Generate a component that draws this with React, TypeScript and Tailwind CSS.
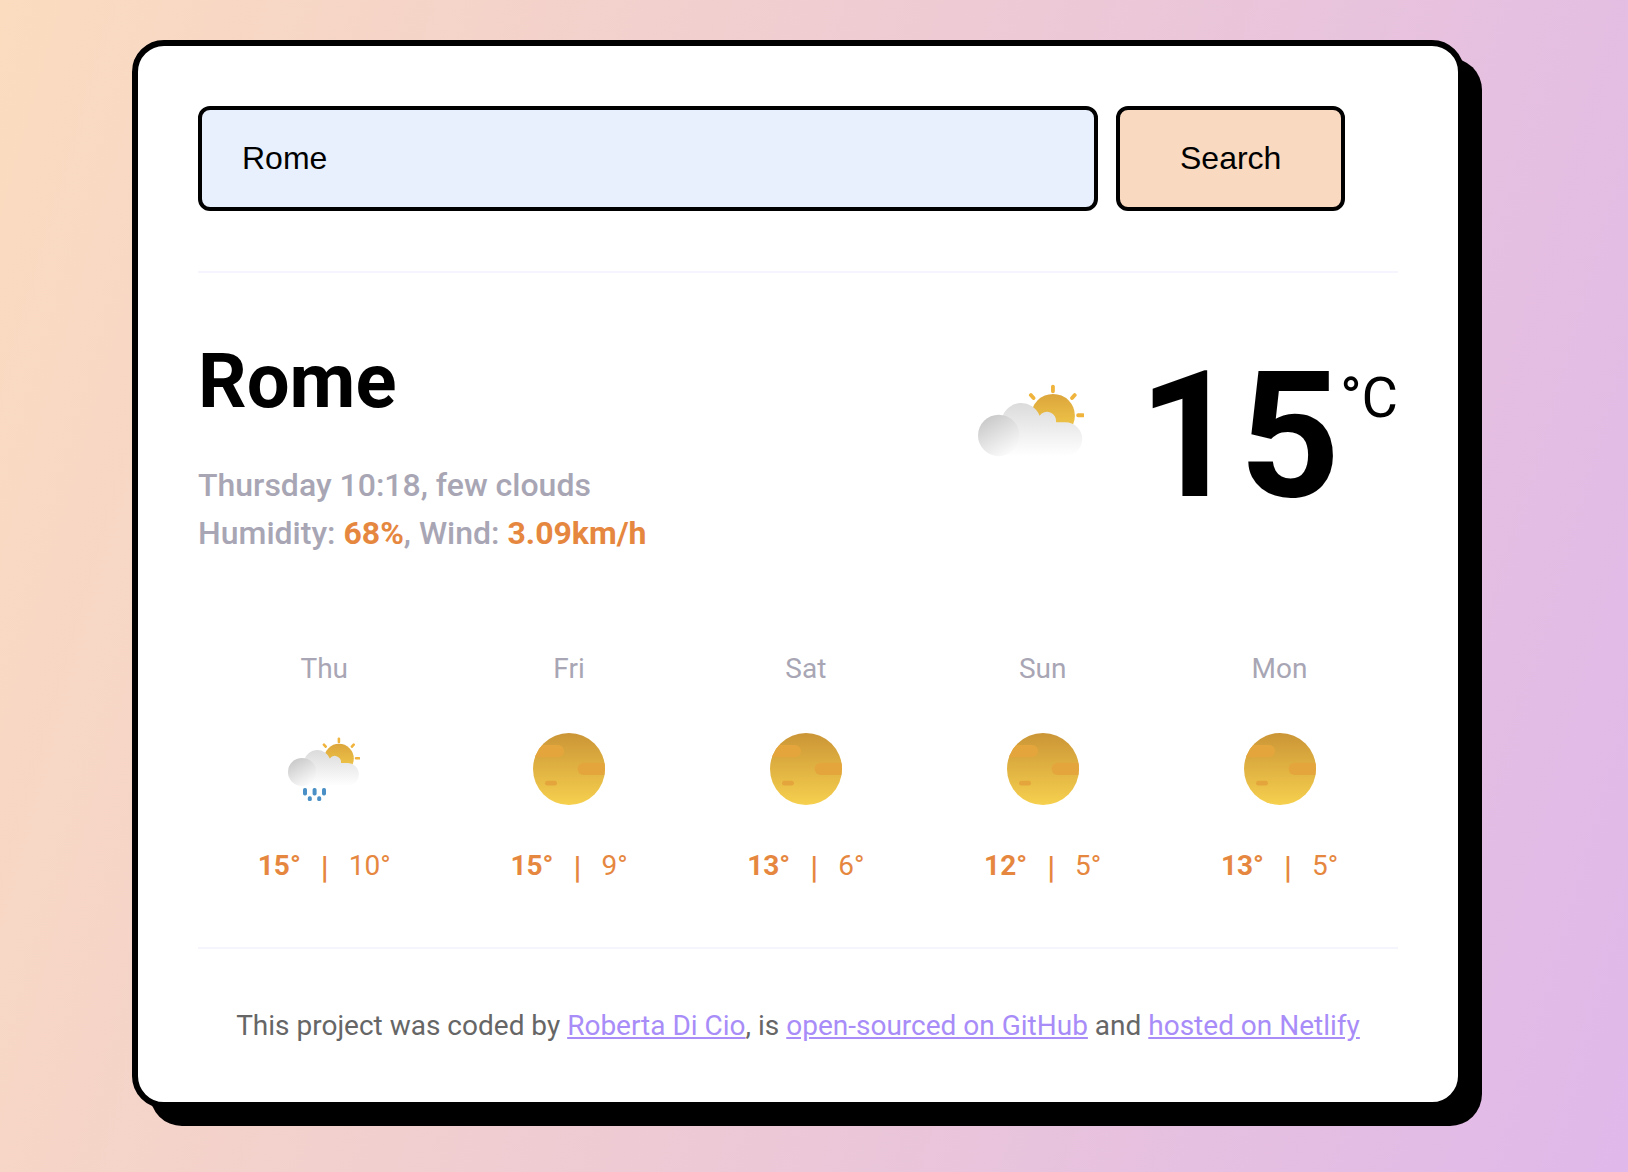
import React, { useState } from "react";

function CloudBody({ id }: { id: string }) {
  return (
    <>
      <defs>
        <linearGradient id={id + "-sun"} x1="0" y1="10" x2="0" y2="40" gradientUnits="userSpaceOnUse">
          <stop offset="0" stopColor="#dba43b" />
          <stop offset="1" stopColor="#f4ce4c" />
        </linearGradient>
        <linearGradient id={id + "-cloud"} x1="0" y1="15" x2="0" y2="53" gradientUnits="userSpaceOnUse">
          <stop offset="0" stopColor="#d9d9d9" />
          <stop offset="1" stopColor="#ffffff" />
        </linearGradient>
        <linearGradient id={id + "-puff"} x1="5" y1="27" x2="20" y2="53" gradientUnits="userSpaceOnUse">
          <stop offset="0" stopColor="#c9c9c9" />
          <stop offset="1" stopColor="#fcfcfc" />
        </linearGradient>
      </defs>
      <circle cx="51" cy="25.6" r="14.8" fill={`url(#${id}-sun)`} />
      <path
        d="M50.9 5.800v3.200M68 25.300h3.200M63.900 13.600l1.800-2M37.700 13.600l-1.800-2"
        stroke="#f0b43c"
        strokeWidth="2.600"
        strokeLinecap="round"
      />
      <path
        d="M14 53V36l2.500-9.500A13.400 13.400 0 0 1 41.800 25.600A6.200 6.200 0 0 1 53 30H59.300A11.500 11.500 0 0 1 59.300 53Z"
        fill={`url(#${id}-cloud)`}
      />
      <circle cx="14.1" cy="39" r="14.1" fill={`url(#${id}-puff)`} />
    </>
  );
}

function FewCloudsIcon({ className }: { className: string }) {
  return (
    <svg viewBox="0 0 72 72" className={className} role="img" aria-label="few clouds">
      <CloudBody id="few" />
    </svg>
  );
}

function RainIcon({ className }: { className: string }) {
  return (
    <svg viewBox="0 0 72 72" className={className} role="img" aria-label="rain">
      <CloudBody id="rain" />
      <g fill="#4a90c6">
        <rect x="15" y="55" width="4" height="7.4" rx="1.7" />
        <rect x="24.6" y="55" width="4" height="7.4" rx="1.7" />
        <rect x="34" y="55" width="4" height="7.4" rx="1.7" />
        <rect x="19.8" y="63.3" width="4" height="4.8" rx="1.7" />
        <rect x="29.2" y="63.3" width="4" height="4.8" rx="1.7" />
      </g>
    </svg>
  );
}

function SunIcon({ id, className }: { id: string; className: string }) {
  return (
    <svg viewBox="0 0 72 72" className={className} role="img" aria-label="clear sky">
      <defs>
        <linearGradient id={id + "-disc"} x1="0" y1="0" x2="0" y2="1">
          <stop offset="0" stopColor="#cb9536" />
          <stop offset="1" stopColor="#f6d04e" />
        </linearGradient>
        <clipPath id={id + "-clip"}>
          <circle cx="36" cy="36" r="36" />
        </clipPath>
      </defs>
      <circle cx="36" cy="36" r="36" fill={`url(#${id}-disc)`} />
      <g clipPath={`url(#${id}-clip)`} fill="#e4a63c">
        <rect x="-6" y="12" width="37" height="12.2" rx="6.1" />
        <rect x="44.6" y="29.8" width="40" height="12.2" rx="6.1" />
        <rect x="12" y="47.8" width="12" height="4.8" rx="2.4" />
      </g>
    </svg>
  );
}

const forecast = [
  { day: "Thu", icon: "rain", max: 15, min: 10 },
  { day: "Fri", icon: "sun", max: 15, min: 9 },
  { day: "Sat", icon: "sun", max: 13, min: 6 },
  { day: "Sun", icon: "sun", max: 12, min: 5 },
  { day: "Mon", icon: "sun", max: 13, min: 5 },
];

const linkClass = "text-[#a88cf8] underline";

export default function App() {
  const [city, setCity] = useState("Rome");

  return (
    <div className="min-h-screen bg-[linear-gradient(106deg,#fbdcbf,#e0b8ea)] pt-10 pr-8 pb-10 font-['Roboto',sans-serif] text-black">
      <main className="mx-auto w-11/12 max-w-[1332px] rounded-[32px] border-[6px] border-black bg-white px-[60px] shadow-[18px_18px_0_#000]">
        <form
          className="flex gap-[18px] border-b-2 border-[#f5f5fd] py-[60px] font-['Liberation_Sans',sans-serif] text-[32px]"
          onSubmit={(e) => e.preventDefault()}
        >
          <input
            type="text"
            aria-label="City"
            value={city}
            onChange={(e) => setCity(e.target.value)}
            className="h-[105px] w-3/4 rounded-xl border-4 border-black bg-[#e8effd] px-10 outline-none"
          />
          <button type="submit" className="h-[105px] rounded-xl border-4 border-black bg-[#f9d9c0] px-[60px] pb-0.5">
            Search
          </button>
        </form>

        <section className="flex justify-between pt-[60px]">
          <div>
            <h1 className="text-[76px] leading-[96px] font-bold">Rome</h1>
            <p className="mt-8 text-[32px] leading-[48px] font-medium text-[#a8a6b4]">
              Thursday 10:18, few clouds
              <br />
              Humidity: <strong className="font-bold text-[#e68740]">68%</strong>, Wind:{" "}
              <strong className="font-bold text-[#e68740]">3.09km/h</strong>
            </p>
          </div>
          <div className="flex items-start">
            <FewCloudsIcon className="mt-[45px] mr-[54px] size-[106px]" />
            <span className="text-[176px] leading-[206px] font-bold">15</span>
            <span className="mt-8 text-[56px] leading-[66px]">
              <span className="font-medium">°</span>C
            </span>
          </div>
        </section>

        <section className="mt-24 flex justify-around border-b-2 border-[#f5f5fd] pb-[60px] text-[28px] leading-8">
          {forecast.map((f) => (
            <div key={f.day} className="flex flex-col items-center">
              <div className="text-[#a8a6b4]">{f.day}</div>
              {f.icon === "rain" ? (
                <RainIcon className="mt-12 mb-[45px] size-[72px]" />
              ) : (
                <SunIcon id={f.day} className="mt-12 mb-[45px] size-[72px]" />
              )}
              <div className="flex min-h-[37px] items-start gap-5 text-[#e68740]">
                <span className="font-bold">{f.max}°</span>
                <span className="text-[32px] leading-[34px] font-medium">|</span>
                <span>{f.min}°</span>
              </div>
            </div>
          ))}
        </section>

        <footer className="py-[60px] text-center text-[28px] leading-[33px] text-[#666]">
          This project was coded by{" "}
          <a href="#author" className={linkClass}>Roberta Di Cio</a>, is{" "}
          <a href="#github" className={linkClass}>open-sourced on GitHub</a> and{" "}
          <a href="#netlify" className={linkClass}>hosted on Netlify</a>
        </footer>
      </main>
    </div>
  );
}
